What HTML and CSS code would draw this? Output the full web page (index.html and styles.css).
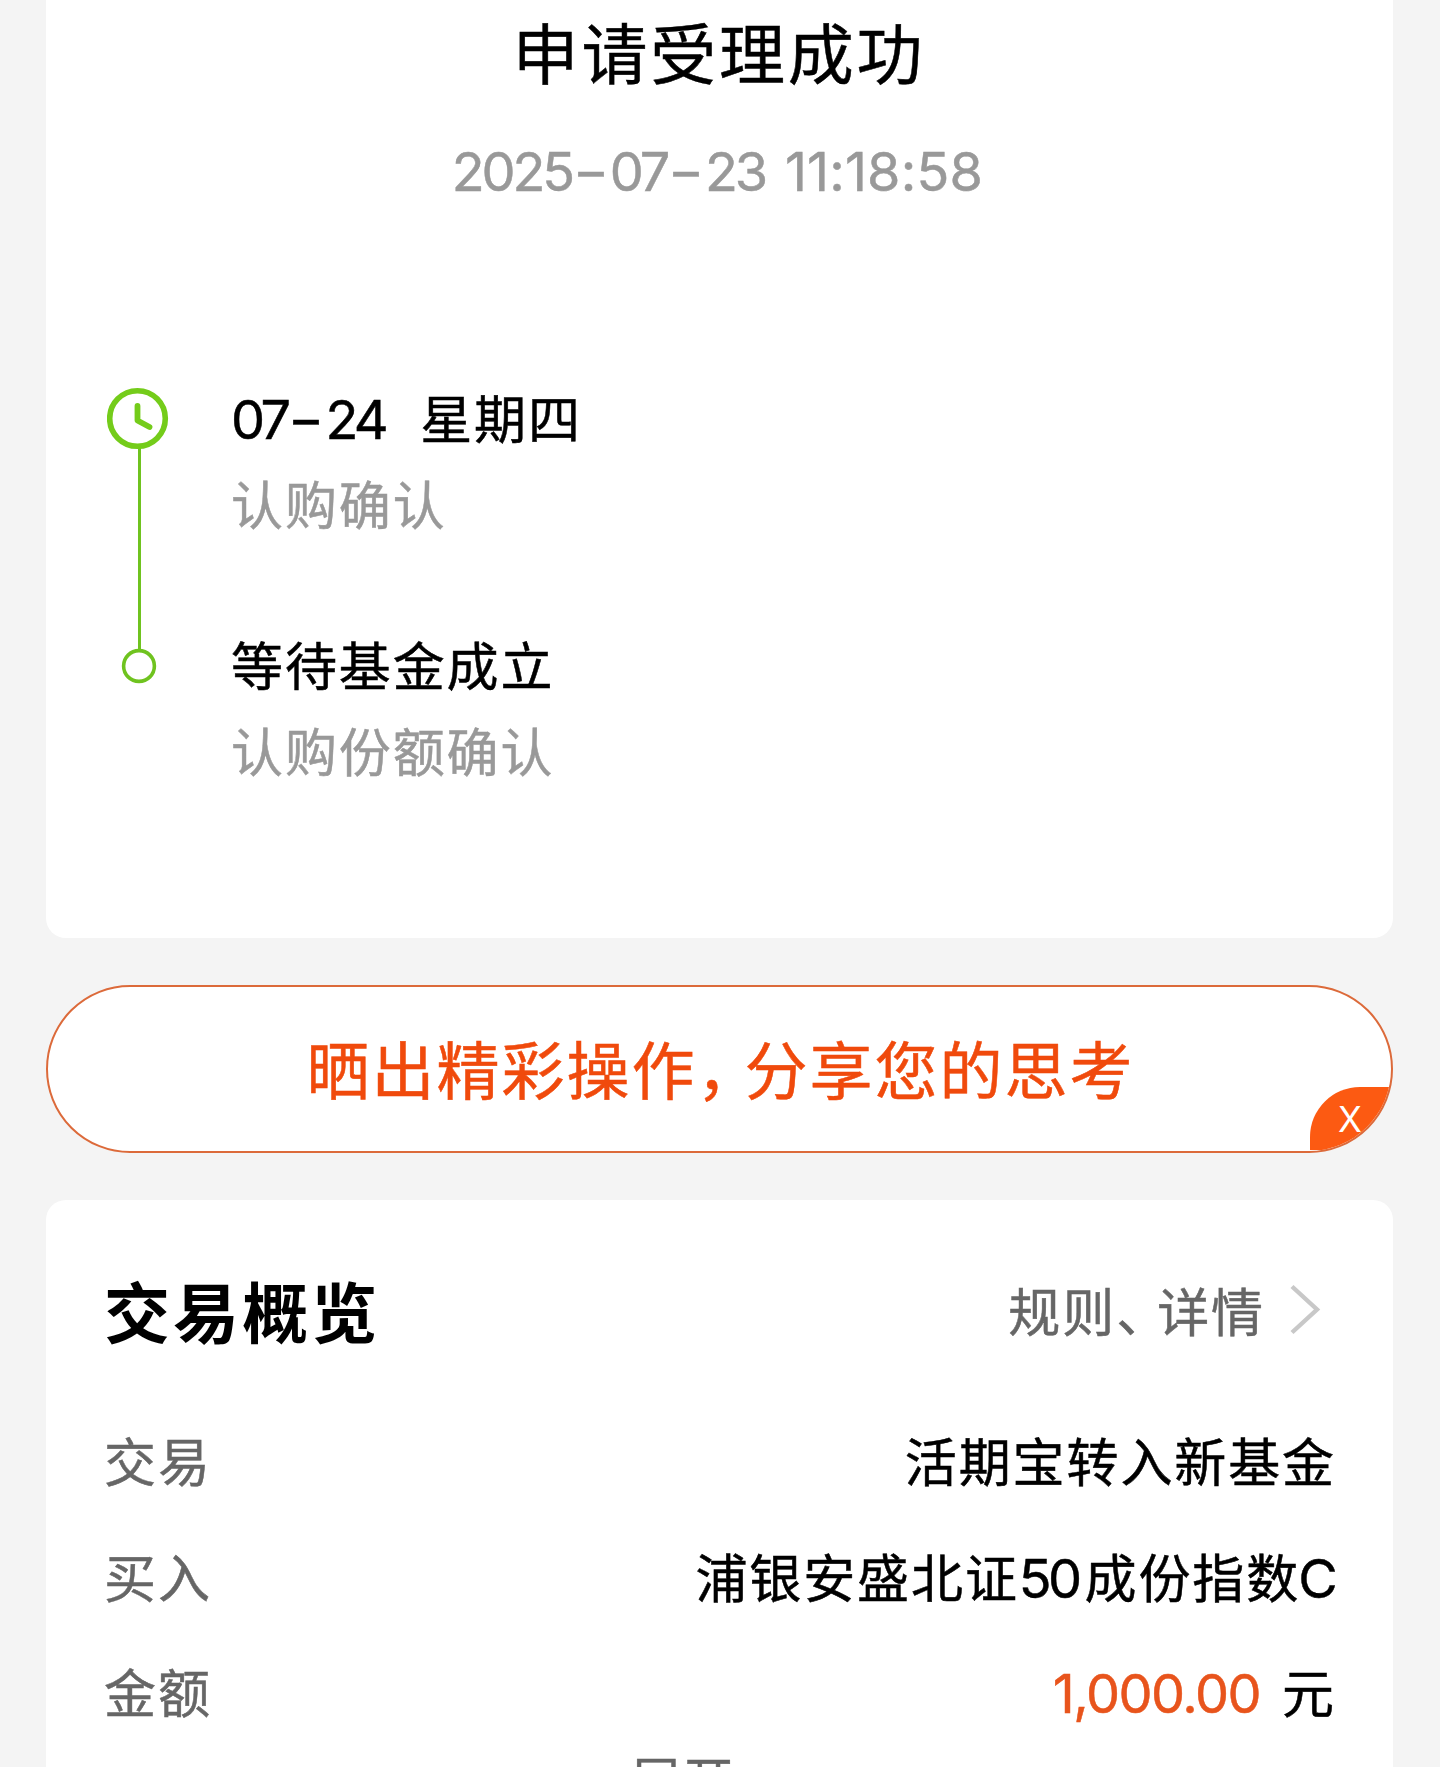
FILE: index.html
```
<!DOCTYPE html>
<html lang="zh-CN">
<head>
  <meta charset="UTF-8">
  <meta name="viewport" content="width=device-width, initial-scale=1.0">
  <title>申请受理成功</title>
  <link rel="stylesheet" href="styles.css">
</head>
<body>

  <!-- 受理结果 -->
  <section class="card result">
    <h1>申请受理成功</h1>
    <p class="time">2025<span class="dash">-</span>07<span class="dash">-</span>23 <span class="clock">11:18:58</span></p>

    <div class="timeline">
      <svg class="rail" width="62" height="298" viewBox="0 0 62 298" fill="none">
        <path d="M32.5 61V263" stroke="#6fc31f" stroke-width="3"/>
        <circle cx="30.5" cy="31.5" r="27.8" stroke="#74cc1a" stroke-width="5.6"/>
        <path d="M30.5 19V33.5L42.5 40" stroke="#74cc1a" stroke-width="5.8" stroke-linecap="round" stroke-linejoin="round"/>
        <circle cx="32" cy="279" r="15.4" stroke="#6fc31f" stroke-width="3.6"/>
      </svg>
      <div class="steps">
        <div class="step">
          <p><span class="num">07<span class="dash">-</span>24</span><span class="week">星期四</span></p>
          <p class="sub">认购确认</p>
        </div>
        <div class="step">
          <p>等待基金成立</p>
          <p class="sub">认购份额确认</p>
        </div>
      </div>
    </div>
  </section>

  <!-- 分享 -->
  <div class="share">
    <span>晒出精彩操作<span class="comma">，</span>分享您的思考</span>
    <span class="close">X</span>
  </div>

  <!-- 交易概览 -->
  <section class="card overview">
    <div class="head">
      <h2>交易概览</h2>
      <a class="more">规则<span class="dun">、</span>详情
        <svg width="32" height="54" viewBox="0 0 32 54" fill="none">
          <path d="M2 3.5L27 26.5L2 49.5" stroke="#c8c8c8" stroke-width="4.4"/>
        </svg>
      </a>
    </div>
    <div class="row">
      <span class="label">交易</span>
      <span>活期宝转入新基金</span>
    </div>
    <div class="row">
      <span class="label">买入</span>
      <span>浦银安盛北证<span class="num fifty">50</span>成份指数<span class="num letter">C</span></span>
    </div>
    <div class="row">
      <span class="label">金额</span>
      <span><span class="num money">1,000.00</span>元</span>
    </div>
    <div class="expand">展开</div>
  </section>

</body>
</html>
```
FILE: styles.css
```
* {
  box-sizing: border-box;
  margin: 0;
  padding: 0;
}
body {
  height: 1767px;
  overflow: hidden;
  padding: 0 47px 0 46px;
  background-color: #f4f4f4;
  color: #000;
  font-family: "Noto Sans CJK SC", sans-serif;
  font-size: 52px;
  line-height: 60px;
  letter-spacing: 1.9px;
  white-space: nowrap;
  -webkit-text-stroke: 0.5px;
}
.card {
  background-color: #fff;
  padding: 0 57px 0 58px;
}
.result {
  height: 938px;
  padding-top: 10px;
  border-radius: 0 0 20px 20px;
}
h1 {
  padding-right: 2px;
  font-size: 66px;
  font-weight: 400;
  line-height: 80px;
  letter-spacing: 2.8px;
  text-align: center;
}
.num, .time {
  font-family: Inter, sans-serif;
  font-size: 54px;
  letter-spacing: -3.6px;
}
.time {
  margin-top: 52px;
  padding-right: 5px;
  color: #999;
  letter-spacing: -3.2px;
  text-align: center;
}
.dash {
  display: inline-block;
  width: 38px;
  text-align: center;
  letter-spacing: 0;
  transform: scaleX(1.45);
}
.clock {
  margin-left: 8px;
  letter-spacing: 0.2px;
}
.timeline {
  display: flex;
  gap: 60px;
  margin-top: 185px;
  padding-left: 3px;
}
.rail {
  flex: none;
}
.steps {
  display: flex;
  flex-direction: column;
  gap: 101px;
  padding-left: 2px;
}
.step p {
  height: 60px;
}
.week {
  margin-left: 35px;
}
.step .sub {
  margin-top: 26px;
  color: #999;
}
.share {
  position: relative;
  display: flex;
  align-items: center;
  justify-content: center;
  height: 168px;
  margin: 47px 0;
  padding: 0 0 5px 2px;
  background-color: #fff;
  border: 2px solid #dc6a3a;
  border-radius: 84px;
  overflow: hidden;
  color: #f04a0c;
  font-size: 63px;
  letter-spacing: 2px;
}
.comma {
  letter-spacing: -15px;
}
.close {
  position: absolute;
  right: 0;
  bottom: 1px;
  width: 81px;
  height: 63px;
  padding-left: 28px;
  background-color: #fc5a12;
  border-top-left-radius: 50px;
  color: #fff;
  font-family: Inter, sans-serif;
  font-size: 35px;
  font-weight: 400;
  line-height: 65px;
  -webkit-text-stroke: 0;
}
.overview {
  height: 640px;
  padding-top: 69px;
  border-radius: 20px 20px 0 0;
}
.head {
  display: flex;
  align-items: center;
  justify-content: space-between;
  height: 80px;
  margin-bottom: 81px;
}
h2 {
  font-size: 66px;
  font-weight: 700;
  letter-spacing: 3.1px;
  -webkit-text-stroke: 0;
}
.more {
  display: flex;
  align-items: center;
  padding: 2px 14px 0 0;
  color: #666;
}
.more svg {
  margin-left: 25px;
}
.dun {
  letter-spacing: -11px;
}
.row {
  display: flex;
  justify-content: space-between;
  height: 60px;
  margin-bottom: 56px;
}
.row + .row + .row {
  margin: -1px 0 27px;
}
.label {
  color: #666;
}
.fifty {
  margin: 0 6px 0 0;
}
.letter {
  margin: 0 2px 0 -2px;
}
.row .money {
  margin-right: 22px;
  color: #e8541c;
  letter-spacing: -1.5px;
}
.expand {
  padding-left: 526px;
  color: #666;
  font-size: 51px;
}
```
